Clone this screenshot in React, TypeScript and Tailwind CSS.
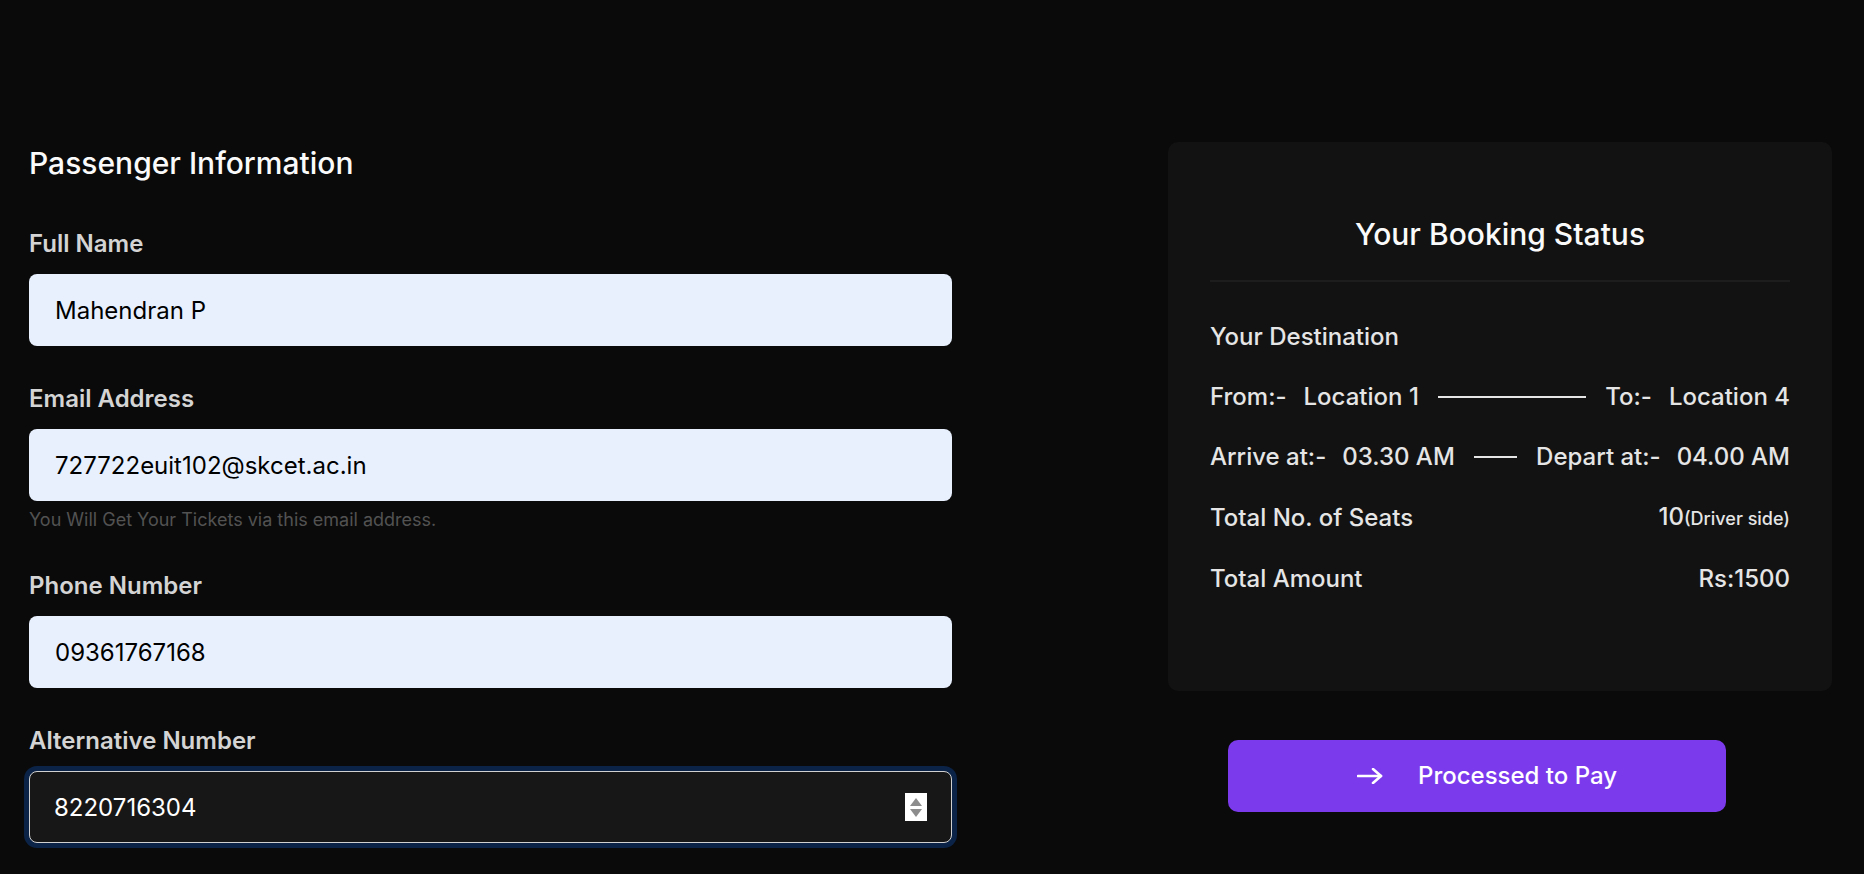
import React from 'react';

type Field = {
  label: string;
  value: string;
  hint?: string;
};

const fields: Field[] = [
  { label: 'Full Name', value: 'Mahendran P' },
  {
    label: 'Email Address',
    value: '727722euit102@skcet.ac.in',
    hint: 'You Will Get Your Tickets via this email address.',
  },
  { label: 'Phone Number', value: '09361767168' },
];

function Spinner() {
  return (
    <div className="pointer-events-none absolute right-[25px] top-1/2 flex h-[28px] w-[22px] -translate-y-1/2 flex-col items-center justify-center gap-[3px] bg-white">
      <svg width="12" height="8" viewBox="0 0 12 8">
        <path d="M6 0 L12 8 L0 8 Z" fill="#8d8d8d" />
      </svg>
      <svg width="12" height="8" viewBox="0 0 12 8">
        <path d="M0 0 L12 0 L6 8 Z" fill="#8d8d8d" />
      </svg>
    </div>
  );
}

function ArrowIcon() {
  return (
    <svg width="26" height="16" viewBox="0 0 26 16" fill="none">
      <path d="M1 8 H24" stroke="white" strokeWidth="2.6" strokeLinecap="round" />
      <path d="M16 1 L24 8 L16 15" stroke="white" strokeWidth="2.6" strokeLinecap="round" strokeLinejoin="round" />
    </svg>
  );
}

function Row({ children }: { children: React.ReactNode }) {
  return <div className="flex items-center justify-between leading-[35px]">{children}</div>;
}

function Line() {
  return <div className="mx-[19px] h-[2px] flex-1 bg-[#e5e5e5]" />;
}

export default function App() {
  return (
    <div className="min-h-screen bg-[#0a0a0a] font-['Inter',sans-serif] text-white">
      <div className="flex">
        {/* passenger form */}
        <div className="w-[952px] shrink-0 pl-[29px] pt-[145px]">
          <h2 className="text-[30px] font-medium leading-[36px] text-[#fafafa]">Passenger Information</h2>

          <div className="mt-[45px] flex flex-col gap-[35px]">
            {fields.map((f) => (
              <div key={f.label}>
                <label className="mb-[13px] block text-[24px] font-semibold leading-[35px] text-[#d4d4d4]">
                  {f.label}
                </label>
                <input
                  type="text"
                  defaultValue={f.value}
                  className="block h-[72px] w-full rounded-[8px] bg-[#e8f0fe] pl-[26px] text-[24px] text-black outline-none"
                />
                {f.hint && (
                  <p className="mt-[6px] text-[18px] leading-[26px] text-[#525252]">{f.hint}</p>
                )}
              </div>
            ))}

            <div>
              <label className="mb-[13px] block text-[24px] font-semibold leading-[35px] text-[#d4d4d4]">
                Alternative Number
              </label>
              <div className="relative">
                <input
                  type="text"
                  defaultValue="8220716304"
                  className="block h-[72px] w-full rounded-[8px] border-[1.5px] border-[#d0d0d0] bg-[#171717] pl-[24px] text-[24px] text-white outline-none ring-[5px] ring-[#0b2346]"
                />
                <Spinner />
              </div>
            </div>
          </div>
        </div>

        {/* booking summary */}
        <div className="ml-[216px] w-[664px] shrink-0 pt-[142px]">
          <div className="rounded-[10px] bg-[#121212] px-[42px] pb-[95px] pt-[74px]">
            <h3 className="text-center text-[30px] font-medium leading-[36px] text-[#fafafa]">Your Booking Status</h3>
            <div className="mt-[28px] h-[2px] bg-[#1d1d1d]" />

            <div className="mt-[37px] flex flex-col gap-[25px] text-[24px] font-medium text-[#e5e5e5]">
              <div className="leading-[35px]">Your Destination</div>
              <Row>
                <div className="flex gap-[17px]">
                  <span>From:-</span>
                  <span>Location 1</span>
                </div>
                <Line />
                <div className="flex gap-[17px]">
                  <span>To:-</span>
                  <span>Location 4</span>
                </div>
              </Row>
              <Row>
                <div className="flex gap-[16px]">
                  <span>Arrive at:-</span>
                  <span>03.30 AM</span>
                </div>
                <Line />
                <div className="flex gap-[16px]">
                  <span>Depart at:-</span>
                  <span>04.00 AM</span>
                </div>
              </Row>
              <Row>
                <span>Total No. of Seats</span>
                <span className="flex items-baseline">
                  10<span className="text-[18px]">(Driver side)</span>
                </span>
              </Row>
              <Row>
                <span>Total Amount</span>
                <span>Rs:1500</span>
              </Row>
            </div>
          </div>

          <button className="ml-[60px] mt-[49px] flex h-[72px] w-[498px] items-center justify-center gap-[35px] rounded-[10px] bg-[#7c3aed] pl-[20px] text-[24px] font-medium text-white">
            <ArrowIcon />
            <span>Processed to Pay</span>
          </button>
        </div>
      </div>
    </div>
  );
}
